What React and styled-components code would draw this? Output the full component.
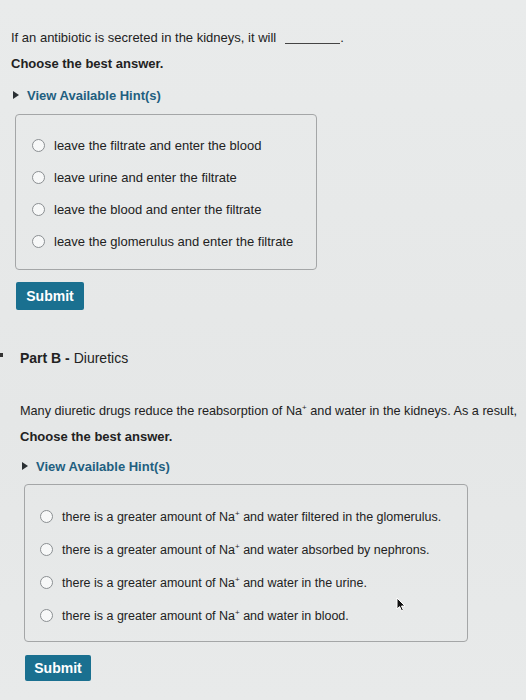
import React from "react";
import styled, { createGlobalStyle } from "styled-components";

const GlobalStyle = createGlobalStyle`
  html, body {
    margin: 0;
    padding: 0;
    background: #e7e9e9;
  }
  body {
    font-family: "Liberation Sans", Arial, Helvetica, sans-serif;
    color: #222;
  }
`;

const Page = styled.div`
  position: relative;
  width: 526px;
  height: 700px;
  overflow: hidden;
  background: linear-gradient(180deg, #e9ebeb 0%, #e5e7e7 60%, #e8eaea 100%);
`;

const Section = styled.section`
  display: flex;
  flex-direction: column;
  align-items: flex-start;
  padding-left: ${(p) => p.indent}px;
  padding-top: ${(p) => p.top || 0}px;
`;

const Text = styled.div`
  font-size: ${(p) => p.size || 13}px;
  line-height: 18px;
  margin-top: ${(p) => p.gap || 0}px;
  font-weight: ${(p) => (p.bold ? 700 : 400)};
  color: #222;
  white-space: nowrap;
`;

const Blank = styled.span`
  display: inline-block;
  width: 55px;
  margin-left: 9px;
  border-bottom: 1px solid #444;
  vertical-align: -2px;
`;

const Sup = styled.sup`
  font-size: 8px;
  line-height: 0;
  vertical-align: 5px;
`;

const Hint = styled.div`
  display: flex;
  align-items: center;
  gap: 8px;
  margin-top: ${(p) => p.gap}px;
  height: 18px;
  padding-left: 2px;
  font-size: 13px;
  font-weight: 700;
  color: #1f5f80;
`;

const Caret = styled.span`
  width: 0;
  height: 0;
  border-top: 4.5px solid transparent;
  border-bottom: 4.5px solid transparent;
  border-left: 6px solid #2a2f33;
`;

const AnswerBox = styled.div`
  box-sizing: border-box;
  width: ${(p) => p.width}px;
  margin-top: ${(p) => p.gap}px;
  margin-left: ${(p) => p.shift}px;
  padding: ${(p) => p.pad};
  border: 1px solid #a4a6a7;
  border-radius: 4px;
  display: flex;
  flex-direction: column;
`;

const Option = styled.label`
  display: flex;
  align-items: center;
  height: ${(p) => p.rowHeight}px;
  padding-left: ${(p) => p.inset}px;
  gap: 9px;
  font-size: ${(p) => p.size}px;
  color: #222;
  white-space: nowrap;
`;

const Radio = styled.span`
  box-sizing: border-box;
  flex: none;
  width: 13px;
  height: 13px;
  border-radius: 50%;
  border: 1.3px solid #8b8f92;
  background: #f7f8f8;
`;

const SubmitButton = styled.button`
  margin-top: ${(p) => p.gap}px;
  margin-left: ${(p) => p.shift}px;
  width: ${(p) => p.width}px;
  height: ${(p) => p.height}px;
  border: none;
  border-radius: 2px;
  background: #1a7090;
  color: #fff;
  font-family: "Liberation Sans", Arial, sans-serif;
  font-size: 14px;
  font-weight: 700;
  padding: 0;
`;

const PartHeader = styled.div`
  display: flex;
  align-items: center;
  margin-top: 39px;
  height: 18px;
  font-size: 14px;
  color: #222;
  white-space: nowrap;
`;

const EdgeMark = styled.span`
  position: absolute;
  left: 0;
  top: 353px;
  width: 3px;
  height: 4px;
  background: #333;
`;

const Cursor = styled.svg`
  position: absolute;
  left: 396px;
  top: 597px;
`;

const partAOptions = [
  "leave the filtrate and enter the blood",
  "leave urine and enter the filtrate",
  "leave the blood and enter the filtrate",
  "leave the glomerulus and enter the filtrate",
];

const partBOptions = [
  "filtered in the glomerulus.",
  "absorbed by nephrons.",
  "in the urine.",
  "in blood.",
];

const Na = () => (
  <>
    Na<Sup>+</Sup>
  </>
);

export default function App() {
  return (
    <Page>
      <GlobalStyle />
      <Section indent={11} top={29}>
        <Text size={13}>
          If an antibiotic is secreted in the kidneys, it will
          <Blank />.
        </Text>
        <Text bold gap={8}>Choose the best answer.</Text>
        <Hint gap={13}>
          <Caret />
          View Available Hint(s)
        </Hint>
        <AnswerBox width={302} gap={10} shift={4} pad="14px 0 12px 0">
          {partAOptions.map((o) => (
            <Option key={o} rowHeight={32} size={13} inset={16}>
              <Radio />
              {o}
            </Option>
          ))}
        </AnswerBox>
        <SubmitButton gap={12} shift={5} width={68} height={28}>
          Submit
        </SubmitButton>
      </Section>

      <EdgeMark />

      <Section indent={20}>
        <PartHeader>
          <b>Part B -</b>&nbsp;Diuretics
        </PartHeader>
        <Text gap={35} size={12.7}>
          Many diuretic drugs reduce the reabsorption of <Na /> and water in the kidneys. As a result,
        </Text>
        <Text bold gap={8}>Choose the best answer.</Text>
        <Hint gap={11}>
          <Caret />
          View Available Hint(s)
        </Hint>
        <AnswerBox width={444} gap={9} shift={4} pad="15px 0 9px 0">
          {partBOptions.map((o) => (
            <Option key={o} rowHeight={33} size={12.5} inset={15}>
              <Radio />
              <span>
                there is a greater amount of <Na /> and water {o}
              </span>
            </Option>
          ))}
        </AnswerBox>
        <SubmitButton gap={13} shift={5} width={66} height={26}>
          Submit
        </SubmitButton>
      </Section>

      <Cursor width="11" height="16" viewBox="0 0 11 16">
        <path d="M1 1 L1 12 L3.6 9.6 L5.6 14 L7.4 13.2 L5.5 9 L9 9 Z" fill="#111" stroke="#fff" strokeWidth="1" />
      </Cursor>
    </Page>
  );
}
